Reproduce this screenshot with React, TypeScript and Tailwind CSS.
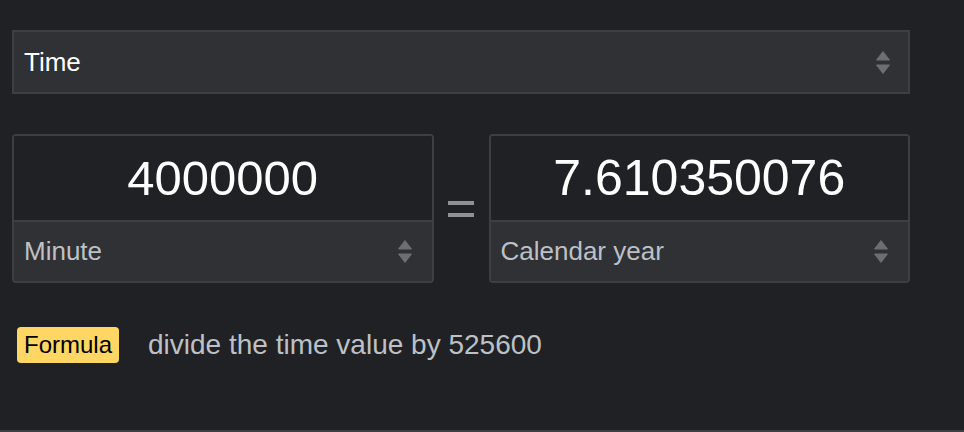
import React from "react";

const font = { fontFamily: '"Liberation Sans", Arial, sans-serif' };

// Up/down arrows used by the native-looking selects
function SortArrows() {
	return (
		<svg width="14" height="23" viewBox="0 0 14 23" className="shrink-0">
			<path d="M7 0.5 L13.5 9 L0.5 9 Z" fill="#6b6e72" strokeLinejoin="round" stroke="#6b6e72" strokeWidth="1" />
			<path d="M0.5 14 L13.5 14 L7 22.5 Z" fill="#6b6e72" strokeLinejoin="round" stroke="#6b6e72" strokeWidth="1" />
		</svg>
	);
}

function UnitBox({ value, unit, big }: { value: string; unit: string; big?: boolean }) {
	return (
		<div className="flex flex-col flex-1 border-2 border-[#3c4043] rounded-[4px] overflow-hidden">
			<div
				className={`h-[84px] flex items-center justify-center bg-[#202124] text-white leading-none ${
					big ? "text-[50px]" : "text-[49px]"
				}`}
			>
				{value}
			</div>
			<div className="h-[2px] bg-[#3c4043]" />
			<div className="h-[59px] flex items-center justify-between bg-[#303134] pl-[10px] pr-[20px] text-[#bdc1c6] text-[26px]">
				<span>{unit}</span>
				<SortArrows />
			</div>
		</div>
	);
}

export default function App() {
	return (
		<div className="h-[432px] bg-[#202124] border-b-2 border-[#3c4043] box-border" style={font}>
			<div className="w-[898px] ml-[12px] pt-[30px]">
				{/* Quantity select */}
				<div className="h-[64px] flex items-center justify-between border-2 border-[#3c4043] bg-[#303134] pl-[10px] pr-[18px] text-white text-[26px]">
					<span>Time</span>
					<SortArrows />
				</div>

				{/* Converter */}
				<div className="mt-[40px] flex items-stretch h-[149px]">
					<UnitBox value="4000000" unit="Minute" />
					<div className="w-[55px] flex items-center justify-center">
						<svg width="26" height="18" viewBox="0 0 26 18">
							<rect x="0" y="1" width="26" height="4" fill="#8e9195" />
							<rect x="0" y="13" width="26" height="4" fill="#8e9195" />
						</svg>
					</div>
					<UnitBox value="7.610350076" unit="Calendar year" big />
				</div>

				{/* Formula */}
				<div className="mt-[41px] flex items-center gap-[29px] pl-[5px]">
					<span className="h-[36px] flex items-center px-[7px] rounded-[4px] bg-[#fdd663] text-black text-[24px]">
						Formula
					</span>
					<span className="text-[#bdc1c6] text-[28px]">divide the time value by 525600</span>
				</div>
			</div>
		</div>
	);
}
